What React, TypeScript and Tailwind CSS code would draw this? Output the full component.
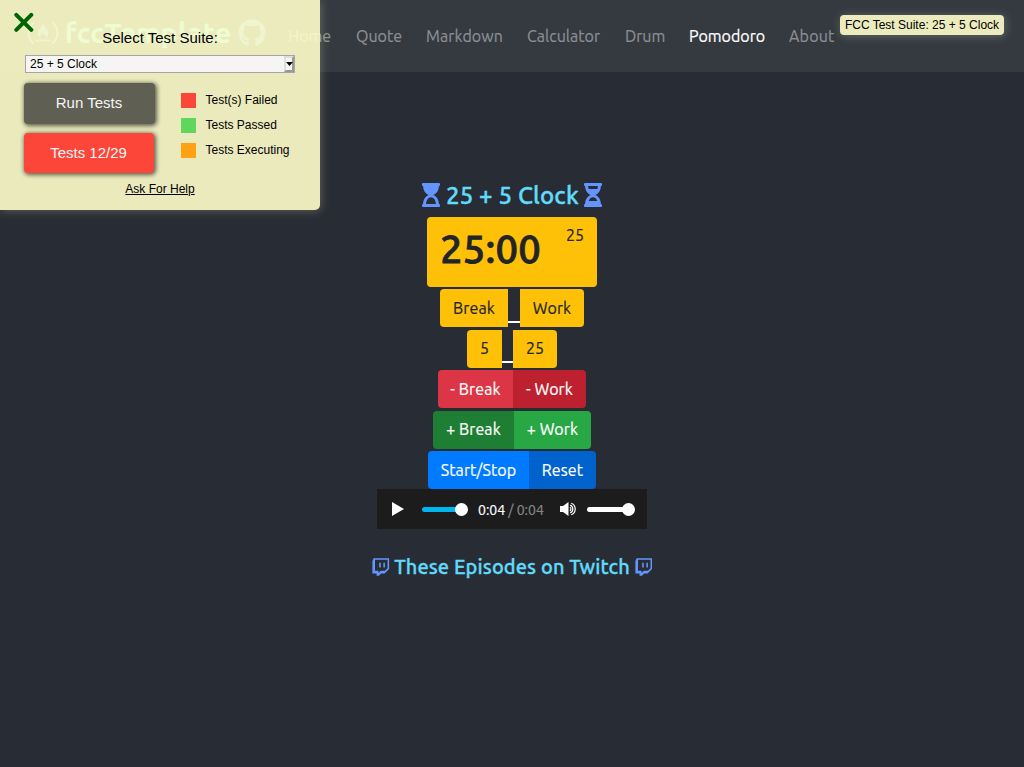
import type { ReactNode } from "react";
import { FaGithub, FaHourglassHalf, FaHourglassStart } from "react-icons/fa";

type TextProps = { children: ReactNode; className: string };

function NavItem({ children, className }: TextProps) {
  return <a className={`block whitespace-nowrap text-[16px] ${className}`}>{children}</a>;
}

function Btn({ children, className }: TextProps) {
  return (
    <button className={`flex h-[38px] items-center justify-center whitespace-nowrap text-[16px] tracking-[0.1px] [-webkit-text-stroke:0.2px_currentColor] ${className}`}>
      {children}
    </button>
  );
}

function CampFlame() {
  return (
    <svg className="h-[24px] w-[32px] shrink-0" viewBox="0 0 32 24" fill="none" stroke="currentColor" strokeWidth="2" strokeLinecap="round">
      <path d="M6 2Q-3 12 6 22M26 2Q35 12 26 22M9 19.5H23" />
      <path
        fill="currentColor"
        stroke="none"
        d="M15.5 2c.8 3.4 5.8 5.5 5.8 10 0 2.600-1.300 4.200-3.300 5 1-1.500 1-3-.2-4.300-.2 1-.7 1.400-1.400 1.200-.8-.8.2-2.200-.6-3.500-.5 2-2.600 2.800-2.400 4.800 0 .8.300 1.400.8 1.900-2.100-.8-3.500-2.400-3.500-4.800 0-3.800 4.800-5.300 4.800-10.300z"
      />
    </svg>
  );
}

function Twitch() {
  return (
    <svg className="h-[20px] w-[17.5px] shrink-0" viewBox="0 0 448 512" fill="#6495ff">
      <path d="M40.1 32L10 108.9v314.3h107V480h60.2l56.8-56.8h87l117-117V32H40.1zm357.8 254.1L331 353H224l-56.8 56.8V353H76.9V72.1h321v214zM331 149v116.9h-40.1V149H331zm-107 0v116.9h-40.1V149H224z" />
    </svg>
  );
}

function Legend({ color, label }: { color: string; label: string }) {
  return (
    <div className="flex h-[25px] items-center">
      <span className={`mr-[9.5px] h-[15px] w-[15px] ${color}`} />
      <span className="pb-[2px] text-[12px] leading-[14px]">{label}</span>
    </div>
  );
}

function TestPanel() {
  return (
    <div className="absolute left-0 top-0 h-[210px] w-[320px] rounded-br-[5px] bg-[#ffffcc]/90 font-['Liberation_Sans',Arial,sans-serif] text-black shadow-[1px_1px_10px_rgba(255,255,204,0.25)]">
      <svg className="absolute left-[14px] top-[12px] h-[20px] w-[20px]" viewBox="0 0 20 20" fill="none" stroke="#006400" strokeWidth="4" strokeLinecap="round">
        <path d="M2.3 2.8 17.3 17.8M17.3 2.8 2.3 17.8" />
      </svg>
      <div className="pt-[29px] text-center text-[15px] leading-[18px]">Select Test Suite:</div>
      <div className="ml-[25px] mt-[8px] flex h-[18px] w-[270px] justify-between border border-[#a5a5a5] bg-[#f6f5f3]">
        <span className="pl-[4px] text-[12px] leading-[16px]">25 + 5 Clock</span>
        <span className="flex w-[10px] items-center justify-center border-2 border-b-[#999] border-l-[#ddd] border-r-[#999] border-t-[#ddd]">
          <svg className="h-[4px] w-[7px] shrink-0" viewBox="0 0 7 4"><path d="M0 0h7L3.5 4z" /></svg>
        </span>
      </div>
      <div className="flex pl-[24px] pt-[10px]">
        <div className="w-[157px]">
          <button className="mb-[9px] block h-[41px] w-[131px] rounded-[4px] bg-[#5f5f53] pr-px text-[15px] text-[#f5f5f5] shadow-[1px_1px_4px_1px_rgba(0,0,0,0.6)]">Run Tests</button>
          <button className="block h-[40px] w-[130px] rounded-[4px] bg-[#fb4639] pr-px text-[15px] text-[#f5f5f5] shadow-[1px_1px_4px_1px_rgba(0,0,0,0.6)]">Tests 12/29</button>
        </div>
        <div className="pt-[5px]">
          <Legend color="bg-[#fb4639]" label="Test(s) Failed" />
          <Legend color="bg-[#5fd75f]" label="Tests Passed" />
          <Legend color="bg-[#ffa114]" label="Tests Executing" />
        </div>
      </div>
      <div className="pt-[9px] text-center text-[12px] leading-[14px] underline">Ask For Help</div>
    </div>
  );
}

function Player() {
  return (
    <div className="flex h-[40px] w-[270px] items-center bg-[#1c1c1c] pl-[15px]">
      <svg className="h-[14px] w-[12px]" viewBox="0 0 12 14" fill="#fff"><path d="M0 0 12 7 0 14z" /></svg>
      <div className="ml-[18px] flex w-[46px] items-center">
        <span className="h-[5px] w-[34px] rounded-l-full bg-[#00b6f0]" />
        <span className="-ml-[1px] h-[13px] w-[13px] rounded-full bg-white" />
      </div>
      <div className="ml-[10px] w-[68px] whitespace-nowrap pt-px text-[14px] leading-[20px] text-[#888] [-webkit-text-stroke:0.2px_currentColor]">
        <span className="text-white">0:04</span> / 0:04
      </div>
      <svg className="ml-[14px] h-[14px] w-[17px]" viewBox="0 0 17 14" fill="none" stroke="#fff" strokeWidth="1.2">
        <path fill="#fff" stroke="none" d="M0 4h3l5.5-4v14L3 10H0z" />
        <path d="M9.8 5.2a2 2 0 0 1 0 3.6M10.2 3.1a4.2 4.2 0 0 1 0 7.8M11.2 1.2a6.2 6.2 0 0 1 0 11.6" />
      </svg>
      <div className="ml-[10px] flex items-center">
        <span className="h-[5px] w-[36px] rounded-l-full bg-white" />
        <span className="-ml-[1px] h-[13px] w-[13px] rounded-full bg-white" />
      </div>
    </div>
  );
}

export default function App() {
  return (
    <div className="relative h-[767px] w-[1024px] overflow-hidden bg-[#282c34] font-[Ubuntu,'Noto_Sans',sans-serif] text-white">
      <nav className="flex h-[72px] items-center bg-[#343a40] pl-[27px] text-[#8b8f93] [-webkit-text-stroke:0.2px_currentColor]">
        <div className="flex w-[261px] items-center pb-[7px] text-[#6495ed]">
          <CampFlame />
          <span className="ml-[6px] w-[166px] whitespace-nowrap text-[28px] font-bold leading-[36px] tracking-[0.4px] text-[#61dafb]">fccTemplate</span>
          <FaGithub className="ml-[7px] h-[28px] w-[28px]" />
        </div>
        <NavItem className="w-[68px]">Home</NavItem>
        <NavItem className="w-[70px]">Quote</NavItem>
        <NavItem className="w-[101px] tracking-[0.1px]">Markdown</NavItem>
        <NavItem className="w-[98px]">Calculator</NavItem>
        <NavItem className="w-[64px]">Drum</NavItem>
        <NavItem className="w-[100px] text-white">Pomodoro</NavItem>
        <NavItem className="w-[60px] tracking-[0.2px]">About</NavItem>
      </nav>
      <main className="flex flex-col items-center pt-[109px] text-[#212529]">
        <h1 className="flex h-[29px] items-center text-[#61dafb]">
          <FaHourglassStart className="mb-[2px] h-[24px] w-[18px] text-[#6495ff]" />
          <span className="mx-[6px] w-[132px] whitespace-nowrap text-center text-[24px] font-medium leading-[29px] tracking-[0.15px] [-webkit-text-stroke:0.4px_currentColor]">25 + 5 Clock</span>
          <FaHourglassHalf className="mb-[2px] h-[24px] w-[18px] text-[#6495ff]" />
        </h1>
        <div className="mt-[7px] flex h-[70px] w-[170px] justify-between rounded-[4px] bg-[#ffc107] px-[13px]">
          <span className="whitespace-nowrap pt-[8px] text-[40px] font-medium leading-[48px] tracking-[0.2px] [-webkit-text-stroke:0.8px_currentColor]">25:00</span>
          <span className="pt-[6px] text-[16px] leading-[24px] [-webkit-text-stroke:0.2px_currentColor]">25</span>
        </div>
        <div className="mt-[2px] flex">
          <Btn className="w-[68px] rounded-l-[4px] bg-[#ffc107]">Break</Btn>
          <span className="mt-[32px] h-[2px] w-[12px] bg-white" />
          <Btn className="w-[64px] rounded-r-[4px] bg-[#ffc107]">Work</Btn>
        </div>
        <div className="mt-[3px] flex">
          <Btn className="w-[35px] rounded-l-[4px] bg-[#ffc107] pb-[2px]">5</Btn>
          <span className="mt-[31px] h-[2px] w-[11px] bg-white" />
          <Btn className="w-[44px] rounded-r-[4px] bg-[#ffc107] pb-[2px]">25</Btn>
        </div>
        <div className="mt-[2px] flex text-white">
          <Btn className="w-[75px] rounded-l-[4px] bg-[#dc3545]">- Break</Btn>
          <Btn className="w-[73px] rounded-r-[4px] bg-[#bd2130]">- Work</Btn>
        </div>
        <div className="mt-[3px] flex text-white">
          <Btn className="w-[81px] rounded-l-[4px] bg-[#1e7e34] pb-[2px]">+ Break</Btn>
          <Btn className="w-[77px] rounded-r-[4px] bg-[#28a745] pb-[2px]">+ Work</Btn>
        </div>
        <div className="mt-[2px] flex text-white">
          <Btn className="w-[101px] rounded-l-[4px] bg-[#007bff]">Start/Stop</Btn>
          <Btn className="w-[67px] rounded-r-[4px] bg-[#0062cc]">Reset</Btn>
        </div>
        <Player />
        <h2 className="mt-[26px] flex h-[24px] items-center text-[#61dafb]">
          <Twitch />
          <span className="mx-[4.5px] w-[236px] whitespace-nowrap text-center text-[20px] font-medium leading-[24px] tracking-[0.1px] [-webkit-text-stroke:0.35px_currentColor]">These Episodes on Twitch</span>
          <Twitch />
        </h2>
      </main>
      <TestPanel />
      <div className="absolute left-[840px] top-[15px] flex h-[20px] w-[164px] items-center justify-center whitespace-nowrap rounded-[4px] bg-[#ffffcc]/90 font-['Liberation_Sans',Arial,sans-serif] text-[12px] text-black shadow-[1px_1px_10px_rgba(255,255,204,0.25)]">
        FCC Test Suite: 25 + 5 Clock
      </div>
    </div>
  );
}
